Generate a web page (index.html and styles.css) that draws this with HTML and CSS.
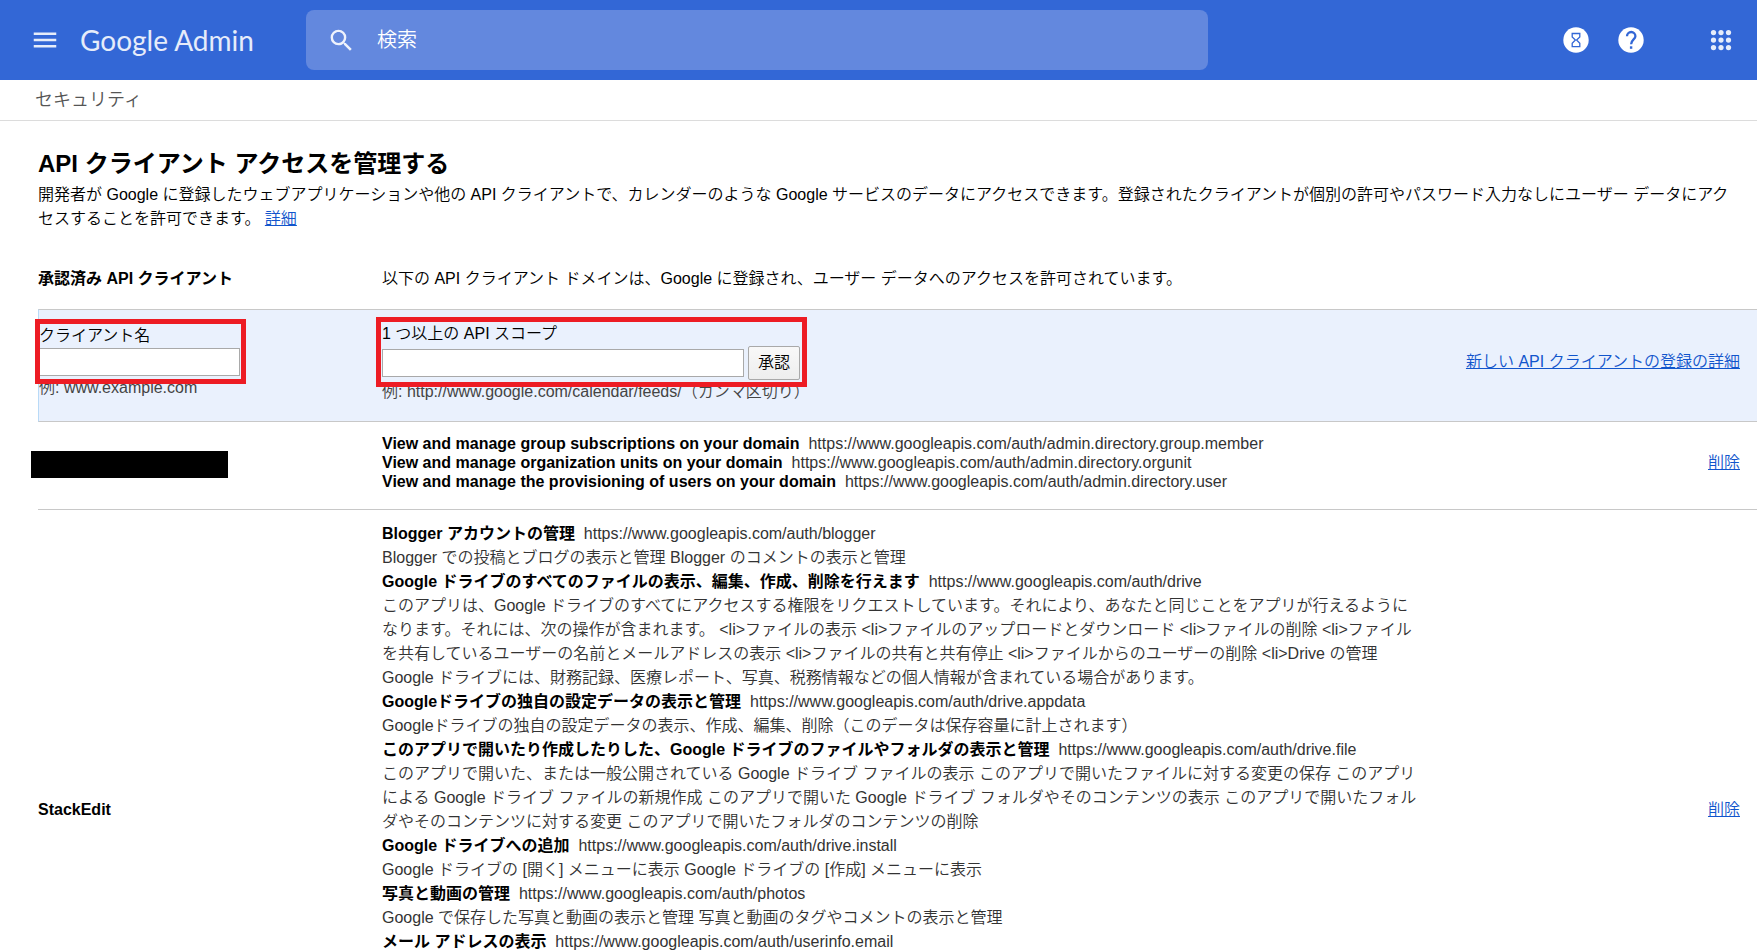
FILE: index.html
```html
<!DOCTYPE html>
<html lang="ja">
<head>
<meta charset="utf-8">
<title>Google Admin</title>
<link rel="stylesheet" href="styles.css">
</head>
<body>
<header class="topbar">
  <div class="brand">
    <button class="icon-btn" type="button" aria-label="メニュー">
      <svg width="30" height="30" viewBox="0 0 24 24"><path fill="#e6ecfa" d="M3 18h18v-2H3v2zm0-5h18v-2H3v2zm0-7v2h18V6H3z"/></svg>
    </button>
    <a class="logo" href="#">Google <span>Admin</span></a>
  </div>
  <form class="search" role="search">
    <svg width="29" height="29" viewBox="0 0 24 24"><path fill="#eef2fc" d="M15.5 14h-.79l-.28-.27A6.47 6.47 0 0 0 16 9.5 6.5 6.5 0 1 0 9.5 16c1.61 0 3.09-.59 4.23-1.57l.27.28v.79l5 4.99L20.49 19l-4.99-5zm-6 0C7.01 14 5 11.99 5 9.5S7.01 5 9.5 5 14 7.01 14 9.5 11.99 14 9.5 14z"/></svg>
    <input type="search" aria-label="検索" placeholder="検索">
  </form>
  <nav class="tools">
    <button class="icon-btn" type="button" aria-label="タスク">
      <svg width="26" height="26" viewBox="0 0 26 26"><circle cx="13" cy="13" r="12.7" fill="#fff"/><path fill="none" stroke="#3367d6" stroke-width="1.3" d="M9.200 6.500h7.600v3.400L13.600 13l3.200 3.200v3.400H9.200v-3.400l3.200-3.200-3.200-3.100z"/></svg>
    </button>
    <button class="icon-btn help" type="button" aria-label="ヘルプ">
      <svg width="26" height="26" viewBox="0 0 26 26"><circle cx="13" cy="13" r="12.7" fill="#fff"/><path fill="none" stroke="#3367d6" stroke-width="2.3" d="M9 9.200a4.200 4.200 0 1 1 8.400 0c0 3-4.300 3.500-4.300 8"/><path fill="#3367d6" d="M11.900 19.300h2.400v2.500h-2.400z"/></svg>
    </button>
    <button class="icon-btn" type="button" aria-label="アプリ">
      <svg width="30" height="30" viewBox="0 0 24 24" fill="#e6ecfa"><circle cx="6" cy="6" r="2.100"/><circle cx="12" cy="6" r="2.100"/><circle cx="18" cy="6" r="2.100"/><circle cx="6" cy="12" r="2.100"/><circle cx="12" cy="12" r="2.100"/><circle cx="18" cy="12" r="2.100"/><circle cx="6" cy="18" r="2.100"/><circle cx="12" cy="18" r="2.100"/><circle cx="18" cy="18" r="2.100"/></svg>
    </button>
  </nav>
</header>
<div class="crumb">セキュリティ</div>
<main class="content">
  <h1>API クライアント アクセスを管理する</h1>
  <p class="lead">開発者が Google に登録したウェブアプリケーションや他の API クライアントで、カレンダーのような Google サービスのデータにアクセスできます。登録されたクライアントが個別の許可やパスワード入力なしにユーザー データにアク<br>セスすることを許可できます。 <a href="#">詳細</a></p>
  <table class="clients">
    <thead>
      <tr>
        <th class="name" scope="col">承認済み API クライアント</th>
        <td colspan="2">以下の API クライアント ドメインは、Google に登録され、ユーザー データへのアクセスを許可されています。</td>
      </tr>
    </thead>
    <tbody>
      <tr class="form-row">
        <td class="name">
          <div class="field marked marked-name">
            <label for="client">クライアント名</label>
            <input id="client" type="text">
            <div class="hint">例: www.example.com</div>
          </div>
        </td>
        <td>
          <div class="field marked marked-scope">
            <label for="scope">1 つ以上の API スコープ</label>
            <div class="line"><input id="scope" type="text"><button type="button">承認</button></div>
            <div class="hint">例: http://www.google.com/calendar/feeds/（カンマ区切り）</div>
          </div>
        </td>
        <td class="action"><a href="#">新しい API クライアントの登録の詳細</a></td>
      </tr>
      <tr class="short">
        <td class="name"><div class="redacted"></div></td>
        <td>
          <div><b>View and manage group subscriptions on your domain</b>&nbsp; https://www.googleapis.com/auth/admin.directory.group.member</div>
          <div><b>View and manage organization units on your domain</b>&nbsp; https://www.googleapis.com/auth/admin.directory.orgunit</div>
          <div><b>View and manage the provisioning of users on your domain</b>&nbsp; https://www.googleapis.com/auth/admin.directory.user</div>
        </td>
        <td class="action"><a href="#">削除</a></td>
      </tr>
      <tr class="long">
        <td class="name"><b>StackEdit</b></td>
        <td>
          <div><b>Blogger アカウントの管理</b>&nbsp; https://www.googleapis.com/auth/blogger</div>
          <div>Blogger での投稿とブログの表示と管理 Blogger のコメントの表示と管理</div>
          <div><b>Google ドライブのすべてのファイルの表示、編集、作成、削除を行えます</b>&nbsp; https://www.googleapis.com/auth/drive</div>
          <div>このアプリは、Google ドライブのすべてにアクセスする権限をリクエストしています。それにより、あなたと同じことをアプリが行えるように<br>なります。それには、次の操作が含まれます。 &lt;li&gt;ファイルの表示 &lt;li&gt;ファイルのアップロードとダウンロード &lt;li&gt;ファイルの削除 &lt;li&gt;ファイル<br>を共有しているユーザーの名前とメールアドレスの表示 &lt;li&gt;ファイルの共有と共有停止 &lt;li&gt;ファイルからのユーザーの削除 &lt;li&gt;Drive の管理<br>Google ドライブには、財務記録、医療レポート、写真、税務情報などの個人情報が含まれている場合があります。</div>
          <div><b>Googleドライブの独自の設定データの表示と管理</b>&nbsp; https://www.googleapis.com/auth/drive.appdata</div>
          <div>Googleドライブの独自の設定データの表示、作成、編集、削除（このデータは保存容量に計上されます）</div>
          <div><b>このアプリで開いたり作成したりした、Google ドライブのファイルやフォルダの表示と管理</b>&nbsp; https://www.googleapis.com/auth/drive.file</div>
          <div>このアプリで開いた、または一般公開されている Google ドライブ ファイルの表示 このアプリで開いたファイルに対する変更の保存 このアプリ<br>による Google ドライブ ファイルの新規作成 このアプリで開いた Google ドライブ フォルダやそのコンテンツの表示 このアプリで開いたフォル<br>ダやそのコンテンツに対する変更 このアプリで開いたフォルダのコンテンツの削除</div>
          <div><b>Google ドライブへの追加</b>&nbsp; https://www.googleapis.com/auth/drive.install</div>
          <div>Google ドライブの [開く] メニューに表示 Google ドライブの [作成] メニューに表示</div>
          <div><b>写真と動画の管理</b>&nbsp; https://www.googleapis.com/auth/photos</div>
          <div>Google で保存した写真と動画の表示と管理 写真と動画のタグやコメントの表示と管理</div>
          <div><b>メール アドレスの表示</b>&nbsp; https://www.googleapis.com/auth/userinfo.email</div>
        </td>
        <td class="action"><a href="#">削除</a></td>
      </tr>
    </tbody>
  </table>
</main>
</body>
</html>
```
FILE: styles.css
```css
*, *::after { box-sizing: border-box; }
body {
  margin: 0;
  height: 100vh;
  overflow: hidden;
  background: #fff;
  color: #000;
  font-family: "Liberation Sans", "Noto Sans CJK JP", sans-serif;
  font-size: 16px;
  font-weight: 350;
  line-height: 24px;
}
button, input { font: inherit; }
b { font-weight: 700; }
a { color: #15c; }

.topbar {
  display: flex;
  align-items: center;
  height: 80px;
  padding-right: 21px;
  background: #3367d6;
}
.brand {
  display: flex;
  align-items: center;
  flex: 0 0 306px;
  gap: 20px;
  padding-left: 30px;
}
.icon-btn {
  display: flex;
  padding: 0;
  border: 0;
  background: none;
}
.logo {
  color: #e6ecfa;
  font-family: Lato, sans-serif;
  font-size: 28px;
  font-weight: 400;
  line-height: 40px;
  text-decoration: none;
}
.search {
  display: flex;
  align-items: center;
  flex: 0 1 902px;
  gap: 21px;
  height: 60px;
  padding-left: 21px;
  border-radius: 8px;
  background: #6388de;
}
.search svg { flex: none; }
.search input {
  flex: 1;
  min-width: 0;
  padding: 0;
  border: 0;
  outline: 0;
  background: none;
  color: #fff;
  font-size: 20px;
  line-height: 30px;
}
.search input::placeholder { color: #fff; opacity: 1; }
.tools {
  display: flex;
  align-items: center;
  margin-left: auto;
  gap: 29px;
}
.help { margin-right: 33px; }

.crumb {
  height: 41px;
  padding-left: 35px;
  border-bottom: 1px solid #dcdcdc;
  color: #555;
  font-size: 18px;
  line-height: 40px;
}

.content { padding: 24px 0 0 38px; }
h1 {
  margin: 0;
  color: #000;
  font-size: 24px;
  line-height: 38px;
}
.lead {
  margin: 0;
  white-space: nowrap;
}

.clients {
  width: 100%;
  margin-top: 28px;
  border-collapse: separate;
  border-spacing: 0;
}
.clients td, .clients th {
  padding: 0;
  text-align: left;
  vertical-align: middle;
  white-space: nowrap;
}
.clients thead td, .clients thead th { padding: 8px 0 18px; }
.clients th, .clients b { color: #000; }
.clients .name { width: 344px; }
.clients .action {
  padding-right: 17px;
  text-align: right;
}
.clients tbody td { border-bottom: 1px solid #c8c8c8; }

.clients .form-row td {
  height: 113px;
  border-top: 1px solid #c8c8c8;
  background: #eaf1fd;
}
.clients .form-row .name { border-left: 1px solid #b9daf7; }
.clients .form-row td:not(.action) { vertical-align: top; }
.clients .form-row .action { padding-bottom: 8px; }
.field {
  position: relative;
  padding-top: 12px;
}
.field label { display: block; }
.field input {
  display: block;
  height: 28px;
  border: 1px solid #a9a9a9;
  background: #fff;
}
.field .line {
  display: flex;
  align-items: center;
  gap: 4px;
}
#client { width: 201px; }
#scope { width: 362px; }
.marked-name { padding-top: 14px; }
.line button {
  height: 34px;
  padding: 0 9px;
  border: 1px solid #a9a9a9;
  border-radius: 2px;
  background: linear-gradient(#f8f8f8, #eee);
  color: #000;
}
.hint { color: #444; }
/* red callout frames drawn over the form fields */
.marked::after {
  content: "";
  position: absolute;
  border: 5px solid #ed1c24;
  pointer-events: none;
}
.marked-name::after { left: -4px; top: 9px; width: 211px; height: 65px; }
.marked-scope::after { left: -6px; top: 7px; width: 431px; height: 70px; }

.clients .short td {
  padding-top: 12px;
  padding-bottom: 18px;
  line-height: 19px;
}
.clients .short .name { padding-bottom: 14px; }
.redacted {
  width: 197px;
  height: 27px;
  margin-left: -7px;
  background: #000;
}
.clients .long td {
  padding-top: 12px;
  padding-bottom: 12px;
}
.clients .long td:nth-child(2) { padding-bottom: 156px; }
.short, .long { color: #333; }
```
